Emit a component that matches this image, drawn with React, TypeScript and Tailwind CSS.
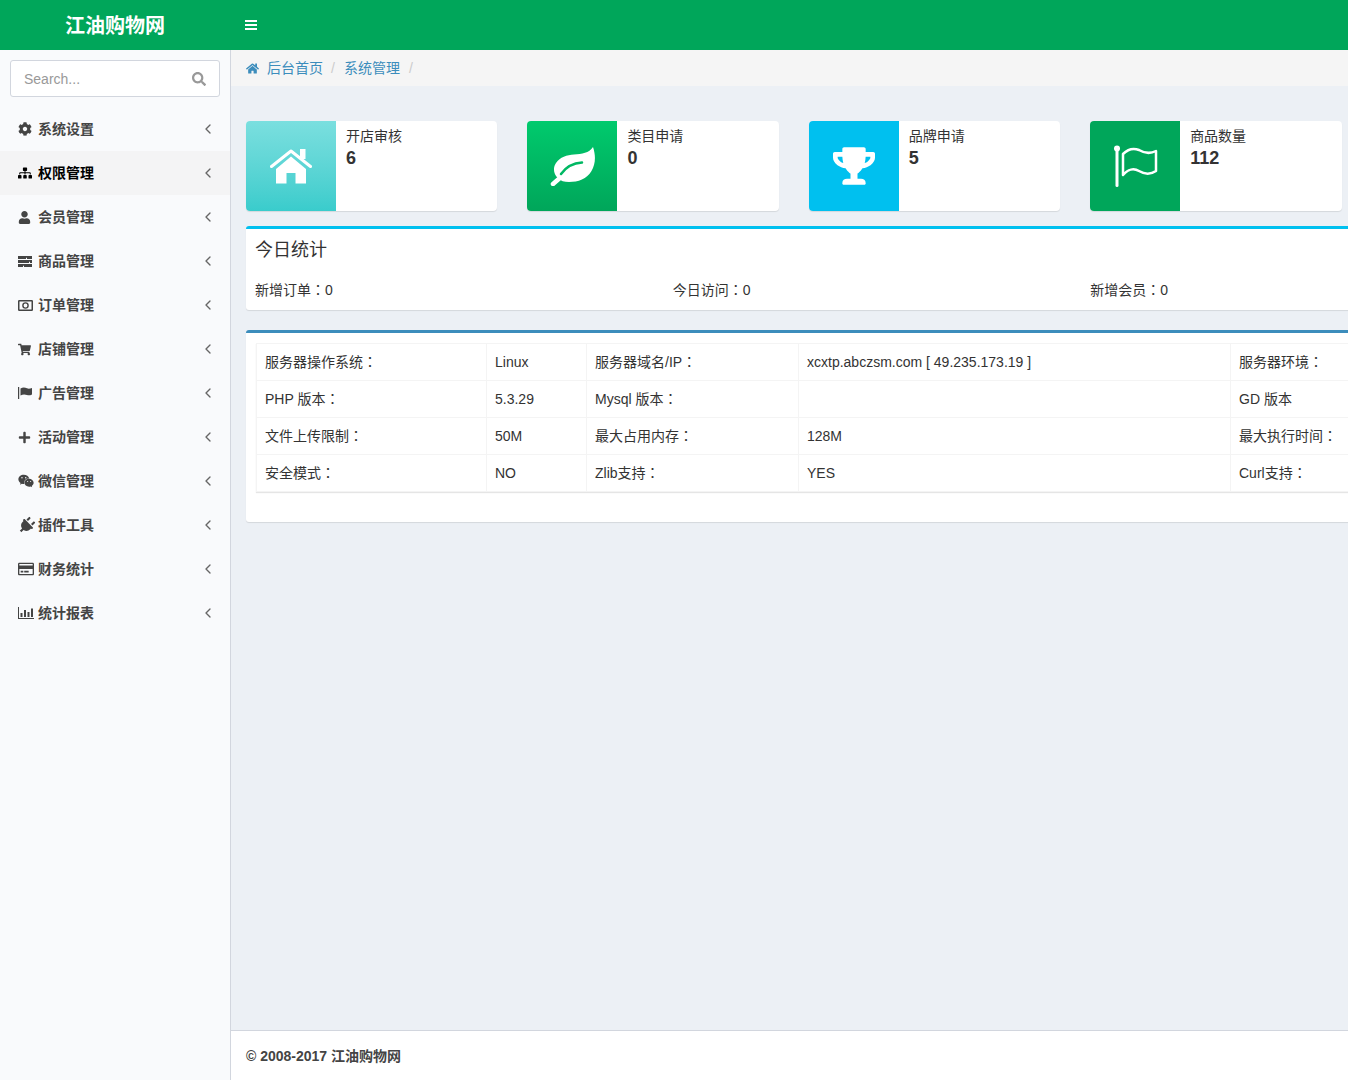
import React from 'react';
import {
  FaCog, FaSitemap, FaUser, FaShoppingCart, FaPlus, FaWeixin,
  FaPlug, FaRegCreditCard, FaSearch, FaHome, FaTrophy,
} from 'react-icons/fa';
import { ChevronLeft } from 'lucide-react';

const TasksIcon = () => (
  <svg viewBox="0 0 14 11" className="h-[11px] w-[14px]" fill="currentColor">
    <path d="M0 0h14v3H9V1.8H8V3H0zM0 4h14v3H12V5.8h-1V7H0zM0 8h14v3H6V9.8H5V11H0z" />
  </svg>
);

const MoneyIcon = () => (
  <svg viewBox="0 0 15 11" className="h-[11px] w-[15px]" fill="none" stroke="currentColor">
    <rect x="0.75" y="0.75" width="13.5" height="9.5" rx="0.5" strokeWidth="1.5" />
    <circle cx="7.5" cy="5.5" r="2.6" strokeWidth="1.4" />
  </svg>
);

const PoleFlagIcon = () => (
  <svg viewBox="0 0 14 12" className="h-3 w-[14px]" fill="currentColor">
    <rect x="0" y="0" width="1.2" height="12" />
    <path d="M2.5 1.5C5 0 7 0.5 9 1.3C10.5 1.900 12 1.600 14 1V7.5C12 8.500 10.5 8.600 9 8C7 7.200 5 7 2.5 8.500Z" />
  </svg>
);

const BarsIcon = () => (
  <svg viewBox="0 0 16 12" className="h-3 w-4" fill="currentColor">
    <rect x="0" y="0" width="1" height="12" />
    <rect x="0" y="11" width="16" height="1" />
    <rect x="2.500" y="6" width="2" height="4" />
    <rect x="6" y="3" width="2" height="7" />
    <rect x="9.500" y="5" width="2" height="5" />
    <rect x="13" y="1.500" width="2" height="8.500" />
  </svg>
);

const menu = [
  { name: '系统设置', icon: <FaCog className="text-sm" /> },
  { name: '权限管理', icon: <FaSitemap className="text-sm" />, active: true },
  { name: '会员管理', icon: <FaUser className="text-[13px]" /> },
  { name: '商品管理', icon: <TasksIcon /> },
  { name: '订单管理', icon: <MoneyIcon /> },
  { name: '店铺管理', icon: <FaShoppingCart className="text-[13px]" /> },
  { name: '广告管理', icon: <PoleFlagIcon /> },
  { name: '活动管理', icon: <FaPlus className="text-[13px]" /> },
  { name: '微信管理', icon: <FaWeixin className="text-base" /> },
  { name: '插件工具', icon: <FaPlug className="rotate-45 text-[17px]" /> },
  { name: '财务统计', icon: <FaRegCreditCard className="text-base" /> },
  { name: '统计报表', icon: <BarsIcon /> },
];

const BigHome = () => (
  <svg viewBox="0 0 42 36" className="h-9 w-[42px]" fill="white">
    <rect x="30" y="1" width="5.500" height="10" />
    <path d="M1.500 18.500L21 3L40.500 18.500" fill="none" stroke="white" strokeWidth="3" strokeLinecap="round" strokeLinejoin="round" />
    <path d="M6 21L21 8.500L36 21V35.500H25.500V25H16.500V35.500H6Z" />
  </svg>
);

const BigLeaf = () => (
  <svg viewBox="0 0 45 39" className="h-[39px] w-[45px]">
    <path d="M43 0C46 9 45.500 17 41.500 24C37 32 28 35 19 35C14 35 11 34 8 31C3 27 3 20 6 16C10 10 17 8 24 7.500C32 7 39 6 43 0Z" fill="white" />
    <path d="M11 30L3 37" stroke="white" strokeWidth="4.500" strokeLinecap="round" />
    <path d="M11 27C16 20 23 16 32 15.500" fill="none" stroke="#00b863" strokeWidth="2.500" strokeLinecap="round" />
  </svg>
);

const BigFlag = () => (
  <svg viewBox="0 0 46 42" className="h-[42px] w-[46px]" fill="none" stroke="white">
    <circle cx="5" cy="3.500" r="3" fill="white" stroke="none" />
    <path d="M5 4V40.500" strokeWidth="3" strokeLinecap="round" />
    <path d="M11 9C16 4 22 3 27 5C32 8 38 9 44 6V26C38 30 32 29 27 26C22 23 16 24 11 30Z" strokeWidth="2.500" strokeLinejoin="round" />
  </svg>
);

const stats = [
  { label: '开店审核', value: '6', box: 'bg-gradient-to-b from-[#7adfdf] to-[#39cccc]', icon: <BigHome /> },
  { label: '类目申请', value: '0', box: 'bg-gradient-to-b from-[#00ca6d] to-[#00a65a]', icon: <BigLeaf /> },
  { label: '品牌申请', value: '5', box: 'bg-[#00c0ef]', icon: <FaTrophy className="text-[42px] text-white" /> },
  { label: '商品数量', value: '112', box: 'bg-[#00a65a]', icon: <BigFlag /> },
];

const rows = [
  ['服务器操作系统：', 'Linux', '服务器域名/IP：', 'xcxtp.abczsm.com [ 49.235.173.19 ]', '服务器环境：'],
  ['PHP 版本：', '5.3.29', 'Mysql 版本：', '', 'GD 版本'],
  ['文件上传限制：', '50M', '最大占用内存：', '128M', '最大执行时间：'],
  ['安全模式：', 'NO', 'Zlib支持：', 'YES', 'Curl支持：'],
];

// the reference sets its full-width colon centred in the cell, which the TC cut does
const Colon = ({ text }: { text: string }) => {
  const parts = text.split('：');
  if (parts.length === 1) return <>{text}</>;
  return (
    <>
      {parts[0]}
      <span className="font-['Noto_Sans_CJK_TC'] leading-none">：</span>
      {parts[1]}
    </>
  );
};

export default function App() {
  return (
    <div className="flex h-[1080px] w-full flex-col overflow-hidden bg-[#ecf0f5] font-['Liberation_Sans','Noto_Sans_CJK_SC',sans-serif] text-sm text-[#333]">
      <header className="flex h-[50px] shrink-0 items-center bg-[#00a65a] text-white">
        <div className="w-[230px] pt-px text-center text-xl font-bold">江油购物网</div>
        <svg viewBox="0 0 12 10" className="ml-[15px] h-2.5 w-3" fill="white">
          <rect x="0" y="0" width="12" height="2" />
          <rect x="0" y="4" width="12" height="2" />
          <rect x="0" y="8" width="12" height="2" />
        </svg>
      </header>

      <div className="flex min-h-0 flex-1">
        <aside className="w-[231px] shrink-0 border-r border-[#d2d6de] bg-[#f9fafc]">
          <div className="p-2.5">
            <div className="flex h-[37px] items-center justify-between rounded-[3px] border border-[#d2d6de] bg-white px-[13px]">
              <span className="text-[#999]">Search...</span>
              <FaSearch className="text-sm text-[#999]" />
            </div>
          </div>
          <ul>
            {menu.map((m) => (
              <li
                key={m.name}
                className={`flex h-11 items-center pl-[18px] pr-3.5 font-bold ${m.active ? 'bg-[#f4f4f5] text-black' : 'text-[#444]'}`}
              >
                <span className="flex w-5 items-center">{m.icon}</span>
                <span>{m.name}</span>
                <ChevronLeft className="ml-auto h-4 w-4 text-[#666]" strokeWidth={2} />
              </li>
            ))}
          </ul>
        </aside>

        <main className="flex min-w-0 flex-1 flex-col overflow-hidden">
          <nav className="flex h-9 shrink-0 items-center bg-[#f5f5f5] px-[15px] text-[#3c8dbc]">
            <FaHome className="mr-2 text-[13px]" />
            <span>后台首页</span>
            <span className="pl-2 pr-[9px] text-[#ccc]">/</span>
            <span>系统管理</span>
            <span className="px-[9px] text-[#ccc]">/</span>
          </nav>

          <div className="min-h-0 flex-1 px-[15px] pt-[35px]">
            <div className="flex w-[1095.5px] gap-[30px]">
              {stats.map((s) => (
                <div key={s.label} className="flex h-[90px] flex-1 overflow-hidden rounded-sm bg-white shadow-[0_1px_1px_rgba(0,0,0,0.1)]">
                  <div className={`flex w-[90px] shrink-0 items-center justify-center ${s.box}`}>{s.icon}</div>
                  <div className="px-2.5 py-[5px]">
                    <div className="leading-5">{s.label}</div>
                    <div className="text-lg font-bold leading-[24px]">{s.value}</div>
                  </div>
                </div>
              ))}
            </div>

            <section className="mt-[15px] h-[84px] w-[1270px] rounded-[3px] border-t-[3px] border-[#00c0ef] bg-white shadow-[0_1px_1px_rgba(0,0,0,0.1)]">
              <h3 className="pl-[9px] pt-2 text-lg leading-[26px]">今日统计</h3>
              <div className="mt-[17px] grid w-[1262px] grid-cols-3 pl-[9px] leading-5">
                <span><Colon text="新增订单：0" /></span>
                <span><Colon text="今日访问：0" /></span>
                <span><Colon text="新增会员：0" /></span>
              </div>
            </section>

            <section className="mt-5 w-[1270px] rounded-[3px] border-t-[3px] border-[#3c8dbc] bg-white px-2.5 pb-[30px] pt-2.5 shadow-[0_1px_1px_rgba(0,0,0,0.1)]">
              <table className="w-full table-fixed border-collapse shadow-[0_1px_1px_rgba(0,0,0,0.1)]">
                <colgroup>
                  <col className="w-[230px]" />
                  <col className="w-[100px]" />
                  <col className="w-[212px]" />
                  <col className="w-[432px]" />
                  <col />
                </colgroup>
                <tbody>
                  {rows.map((r) => (
                    <tr key={r[0]}>
                      {r.map((c, i) => (
                        <td key={i} className="h-[37px] border border-[#f4f4f4] px-2 leading-5"><Colon text={c} /></td>
                      ))}
                    </tr>
                  ))}
                </tbody>
              </table>
            </section>
          </div>

          <footer className="flex h-[50px] shrink-0 items-center border-t border-[#d2d6de] bg-white px-[15px] font-bold text-[#444]">
            © 2008-2017 江油购物网
          </footer>
        </main>
      </div>
    </div>
  );
}
